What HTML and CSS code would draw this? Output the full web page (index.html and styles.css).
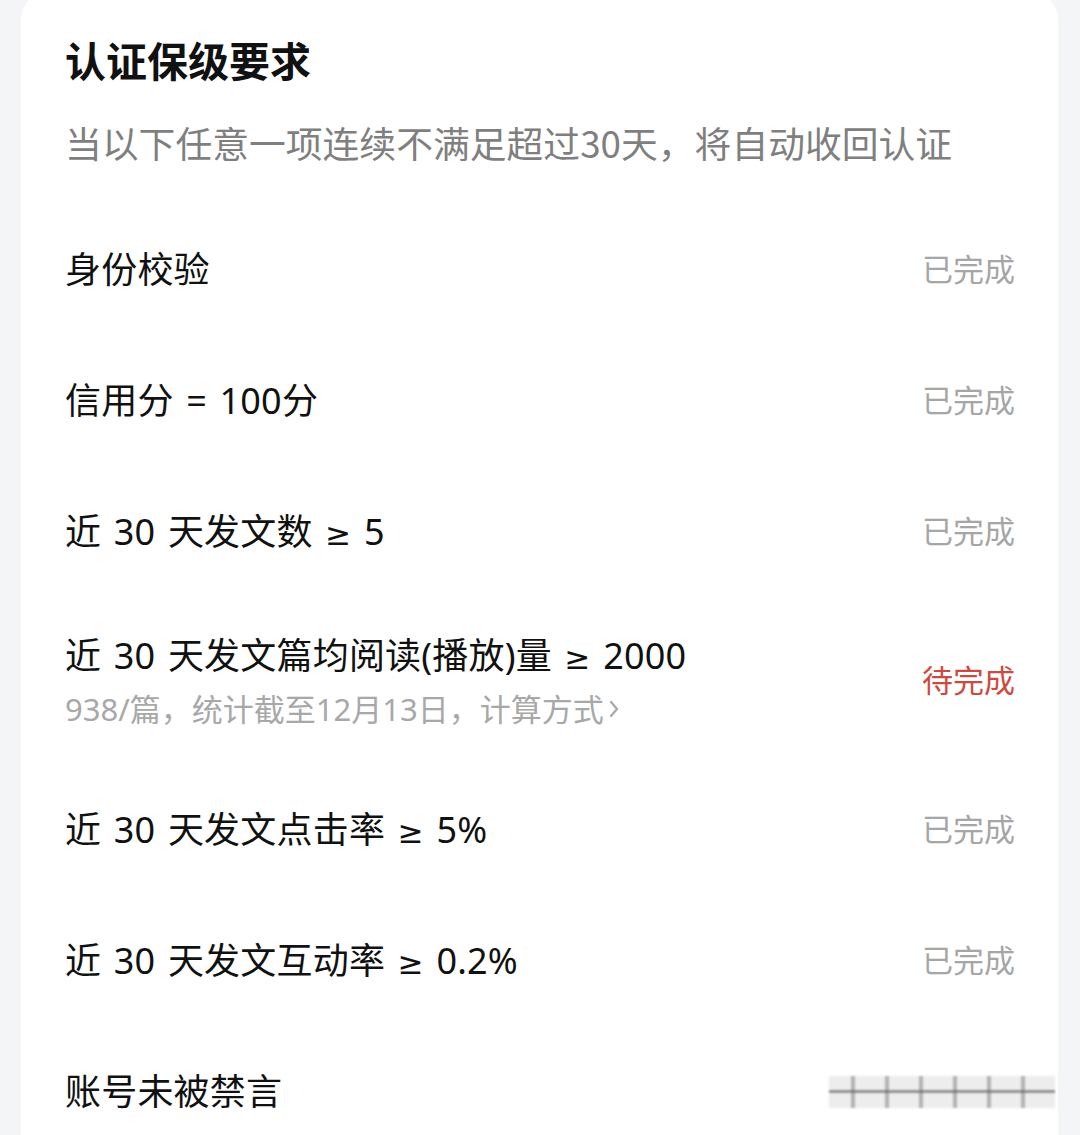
FILE: index.html
```html
<!DOCTYPE html>
<html lang="zh-CN">
<head>
  <meta charset="UTF-8">
  <title>认证保级要求</title>
  <link rel="stylesheet" href="styles.css">
</head>
<body>

<div class="card">
  <div class="head">
    <h1>认证保级要求</h1>
    <p class="desc">当以下任意一项连续不满足超过30天，将自动收回认证</p>
  </div>

  <div class="row">
    <div class="label">身份校验</div>
    <div class="status">已完成</div>
  </div>
  <div class="row">
    <div class="label">信用分 = 100分</div>
    <div class="status">已完成</div>
  </div>
  <div class="row">
    <div class="label">近 30 天发文数 <span class="ge">≥</span> 5</div>
    <div class="status">已完成</div>
  </div>
  <div class="row two">
    <div>
      <div class="label">近 30 天发文篇均阅读(播放)量 <span class="ge">≥</span> 2000</div>
      <div class="note">938/篇，统计截至12月13日，计算方式<svg class="chev" viewBox="0 0 12 20" width="12" height="20"><path d="M3 3 L9 10 L3 17" fill="none" stroke="#a8a8a8" stroke-width="2.2" stroke-linecap="round" stroke-linejoin="round"/></svg></div>
    </div>
    <div class="status todo">待完成</div>
  </div>
  <div class="row">
    <div class="label">近 30 天发文点击率 <span class="ge">≥</span> 5%</div>
    <div class="status">已完成</div>
  </div>
  <div class="row">
    <div class="label">近 30 天发文互动率 <span class="ge">≥</span> 0.2%</div>
    <div class="status">已完成</div>
  </div>
  <div class="row">
    <div class="label">账号未被禁言</div>
    <div class="smear"></div>
  </div>
</div>

</body>
</html>
```

FILE: styles.css
```css
html, body { margin: 0; background: #f4f5f7; }
body {
  font-family: "Noto Sans", "Noto Sans CJK SC", sans-serif;
  color: #111;
  overflow: hidden;
  height: 1135px;
}
.card {
  margin: -10px 0 0 21px;
  width: 1037px;
  min-height: 1200px;
  background: #fff;
  border-radius: 30px;
  padding: 44px 43px 0 44px;
  box-sizing: border-box;
}
.head { padding-bottom: 38px; }
h1 { margin: 0; font-size: 41px; line-height: 50px; font-weight: 700; font-family: "Noto Sans CJK SC", sans-serif; }
.desc { margin: 34px 0 0; font-size: 36.8px; line-height: 48px; color: #7f7f7f; font-family: "Noto Sans CJK SC", sans-serif; }

.row {
  display: flex; align-items: center; justify-content: space-between;
  padding: 43px 0;
}
.row.two { padding: 36px 0; }
.label { height: 45px; font-size: 36px; line-height: 45px; word-spacing: 3px; letter-spacing: 0.2px; white-space: nowrap; }
.ge { font-family: "DejaVu Sans", sans-serif; font-size: 31px; line-height: 0; }
.note { margin-top: 12px; height: 38px; font-size: 31px; line-height: 38px; color: #a8a8a8; display: flex; align-items: center; }
.chev { margin-left: 4px; }
.status { font-size: 31px; line-height: 45px; color: #a6a6a6; }
.status.todo { color: #cc4a40; }

.smear {
  width: 226px; height: 32px; margin-right: -40px;
  background:
    linear-gradient(to bottom, transparent 14px, #666 15px, #666 16px, transparent 17px),
    repeating-linear-gradient(to right, transparent 0 22px, rgba(70,70,70,.35) 22px 26px, transparent 26px 34px);
  background-color: rgba(215,215,215,.45);
  filter: blur(0.8px);
}
```
